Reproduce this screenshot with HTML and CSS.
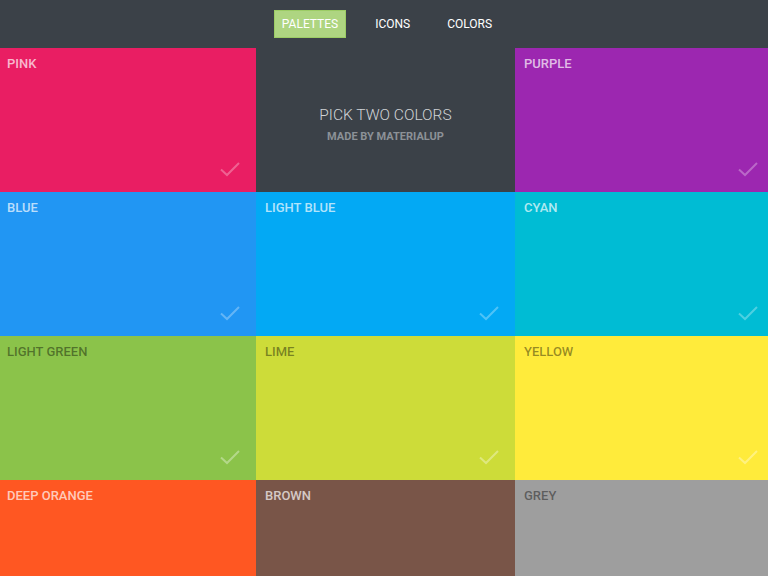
FILE: index.html
```html
<!DOCTYPE html>
<html lang="en">
<head>
    <meta charset="UTF-8">
    <meta name="viewport" content="width=device-width, initial-scale=1.0">
    <title>Pick Two Colors</title>
    <link rel="stylesheet" href="styles.css">
</head>
<body>

<div class="nav">
    <a href="#" class="nav-link active">PALETTES</a>
    <a href="#" class="nav-link">ICONS</a>
    <a href="#" class="nav-link">COLORS</a>
</div>

<div class="grid">
    <div class="swatch pink"><span class="label">PINK</span><svg class="check" viewBox="0 0 24 24"><path d="M3 12.5l6 5.5L21 6"/></svg></div>
    <div class="swatch intro">
        <div class="intro-title">PICK TWO COLORS</div>
        <div class="intro-sub">MADE BY MATERIALUP</div>
    </div>
    <div class="swatch purple"><span class="label">PURPLE</span><svg class="check" viewBox="0 0 24 24"><path d="M3 12.5l6 5.5L21 6"/></svg></div>

    <div class="swatch blue"><span class="label">BLUE</span><svg class="check" viewBox="0 0 24 24"><path d="M3 12.5l6 5.5L21 6"/></svg></div>
    <div class="swatch light-blue"><span class="label">LIGHT BLUE</span><svg class="check" viewBox="0 0 24 24"><path d="M3 12.5l6 5.5L21 6"/></svg></div>
    <div class="swatch cyan"><span class="label">CYAN</span><svg class="check" viewBox="0 0 24 24"><path d="M3 12.5l6 5.5L21 6"/></svg></div>

    <div class="swatch light-green dark-text"><span class="label">LIGHT GREEN</span><svg class="check" viewBox="0 0 24 24"><path d="M3 12.5l6 5.5L21 6"/></svg></div>
    <div class="swatch lime dark-text"><span class="label">LIME</span><svg class="check" viewBox="0 0 24 24"><path d="M3 12.5l6 5.5L21 6"/></svg></div>
    <div class="swatch yellow dark-text"><span class="label">YELLOW</span><svg class="check" viewBox="0 0 24 24"><path d="M3 12.5l6 5.5L21 6"/></svg></div>

    <div class="swatch deep-orange"><span class="label">DEEP ORANGE</span><svg class="check" viewBox="0 0 24 24"><path d="M3 12.5l6 5.5L21 6"/></svg></div>
    <div class="swatch brown"><span class="label">BROWN</span><svg class="check" viewBox="0 0 24 24"><path d="M3 12.5l6 5.5L21 6"/></svg></div>
    <div class="swatch grey dark-text"><span class="label">GREY</span><svg class="check" viewBox="0 0 24 24"><path d="M3 12.5l6 5.5L21 6"/></svg></div>
</div>

</body>
</html>
```

FILE: styles.css
```css
body {
    font-family: Roboto, "Noto Sans", Arial, sans-serif;
    margin: 0;
    background-color: #3b4148;
    overflow: hidden;
}
.nav {
    height: 48px;
    background-color: #3b4148;
    display: flex;
    justify-content: center;
    align-items: center;
    gap: 21px;
    padding-left: 6px;
    box-sizing: border-box;
}
.nav-link {
    color: #ffffff;
    text-decoration: none;
    font-size: 12px;
    padding: 6px 7px;
    line-height: 14px;
    border: 1px solid transparent;
}
.nav-link.active {
    background-color: #aed581;
    border-color: #9ccc65;
}
.grid {
    display: grid;
    grid-template-columns: 256px 259px 259px;
    grid-auto-rows: 144px;
}
.swatch {
    position: relative;
    padding: 9px 8px 8px 9px;
    box-sizing: border-box;
}
.swatch:nth-child(3n+1) {
    padding-left: 7px;
}
.label {
    font-size: 13px;
    font-weight: 500;
    color: rgba(255, 255, 255, 0.7);
    display: block;
    line-height: 14px;
}
.dark-text .label {
    color: rgba(0, 0, 0, 0.42);
}
.check {
    position: absolute;
    right: 14px;
    bottom: 11px;
    width: 24px;
    height: 24px;
    fill: none;
    stroke: rgba(255, 255, 255, 0.3);
    stroke-width: 2;
}
.dark-text .check {
    stroke: rgba(255, 255, 255, 0.35);
}
.intro {
    background-color: #3b4148;
    display: flex;
    flex-direction: column;
    justify-content: center;
    align-items: center;
    padding: 8px 0 0 0;
}
.intro-title {
    font-size: 15.5px;
    font-weight: 300;
    color: #d0d3d6;
    margin-bottom: 6px;
}
.intro-sub {
    font-size: 11px;
    font-weight: 700;
    color: #8c9197;
}
.pink { background-color: #e91e63; }
.purple { background-color: #9c27b0; }
.blue { background-color: #2196f3; }
.light-blue { background-color: #03a9f4; }
.cyan { background-color: #00bcd4; }
.light-green { background-color: #8bc34a; }
.lime { background-color: #cddc39; }
.yellow { background-color: #ffeb3b; }
.deep-orange { background-color: #ff5722; }
.brown { background-color: #795548; }
.grey { background-color: #9e9e9e; }
```
